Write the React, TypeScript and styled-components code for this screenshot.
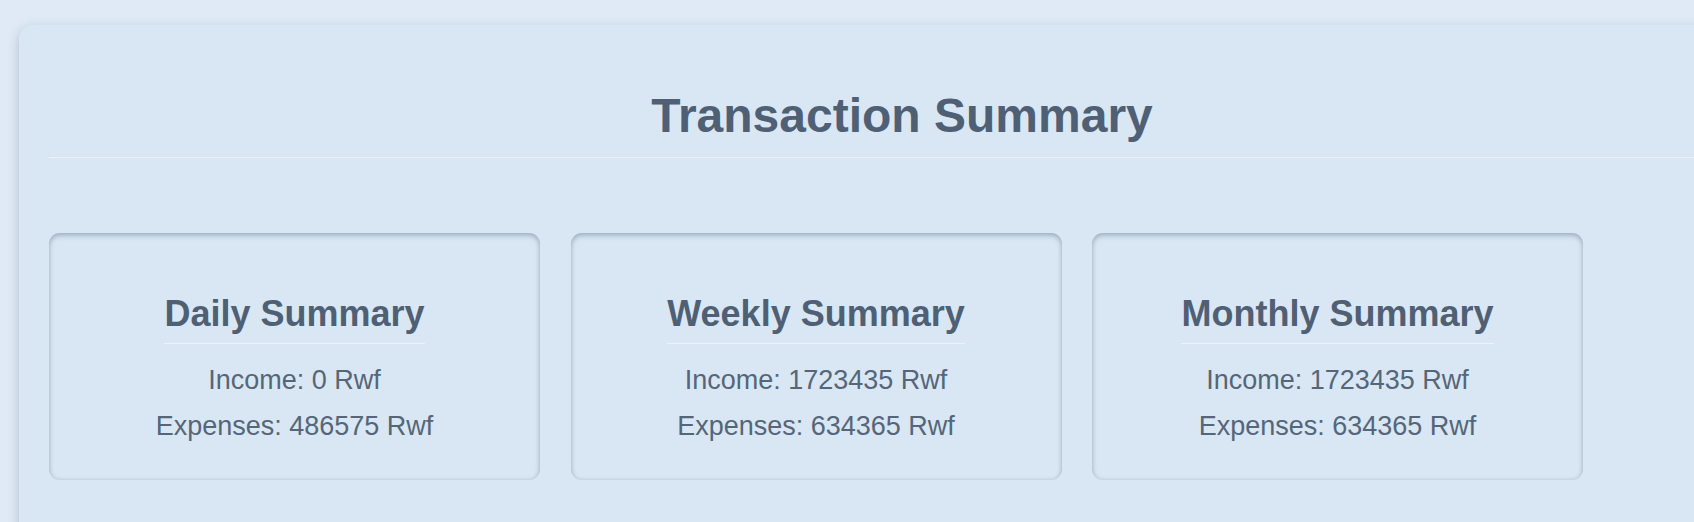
import React from "react";
import styled, { createGlobalStyle } from "styled-components";

const GlobalStyle = createGlobalStyle`
  html, body {
    margin: 0;
    padding: 0;
    overflow: hidden;
    background: #dfeaf6;
    font-family: "Liberation Sans", Arial, sans-serif;
  }
  * { box-sizing: border-box; }
`;

const Page = styled.div`
  padding: 25px 0 0 19px;
  min-height: 522px;
`;

const Panel = styled.section`
  width: 1766px;
  min-height: 520px;
  background: #d9e7f4;
  border-radius: 14px;
  box-shadow: 0 4px 12px rgba(60, 80, 100, 0.28);
  padding: 63px 30px 40px 30px;
`;

const Title = styled.h1`
  margin: 0;
  padding-bottom: 14px;
  border-bottom: 1px solid rgba(255, 255, 255, 0.45);
  text-align: center;
  font-size: 48px;
  font-weight: 700;
  color: #4f6074;
  line-height: normal;
`;

const CardRow = styled.div`
  display: flex;
  gap: 30.5px;
  margin-top: 75px;
`;

const Card = styled.article`
  width: 491px;
  height: 247px;
  border-radius: 11px;
  background: #d9e7f4;
  box-shadow: inset 0 3px 5px rgba(60, 80, 100, 0.28),
    inset 0 0 4px rgba(60, 80, 100, 0.18);
  display: flex;
  flex-direction: column;
  align-items: center;
  padding-top: 60px;
`;

const CardTitle = styled.h3`
  margin: 0 0 21px;
  padding-bottom: 8px;
  border-bottom: 1px solid rgba(255, 255, 255, 0.5);
  font-size: 36px;
  font-weight: 700;
  color: #4f6074;
  line-height: normal;
`;

const Line = styled.p`
  margin: 0;
  font-size: 27px;
  line-height: 31px;
  color: #55667a;
  & + & {
    margin-top: 15px;
  }
`;

const summaries = [
  { title: "Daily Summary", income: "0", expenses: "486575" },
  { title: "Weekly Summary", income: "1723435", expenses: "634365" },
  { title: "Monthly Summary", income: "1723435", expenses: "634365" },
];

export default function App() {
  return (
    <>
      <GlobalStyle />
      <Page>
        <Panel>
          <Title>Transaction Summary</Title>
          <CardRow>
            {summaries.map((s) => (
              <Card key={s.title}>
                <CardTitle>{s.title}</CardTitle>
                <Line>Income: {s.income} Rwf</Line>
                <Line>Expenses: {s.expenses} Rwf</Line>
              </Card>
            ))}
          </CardRow>
        </Panel>
      </Page>
    </>
  );
}
